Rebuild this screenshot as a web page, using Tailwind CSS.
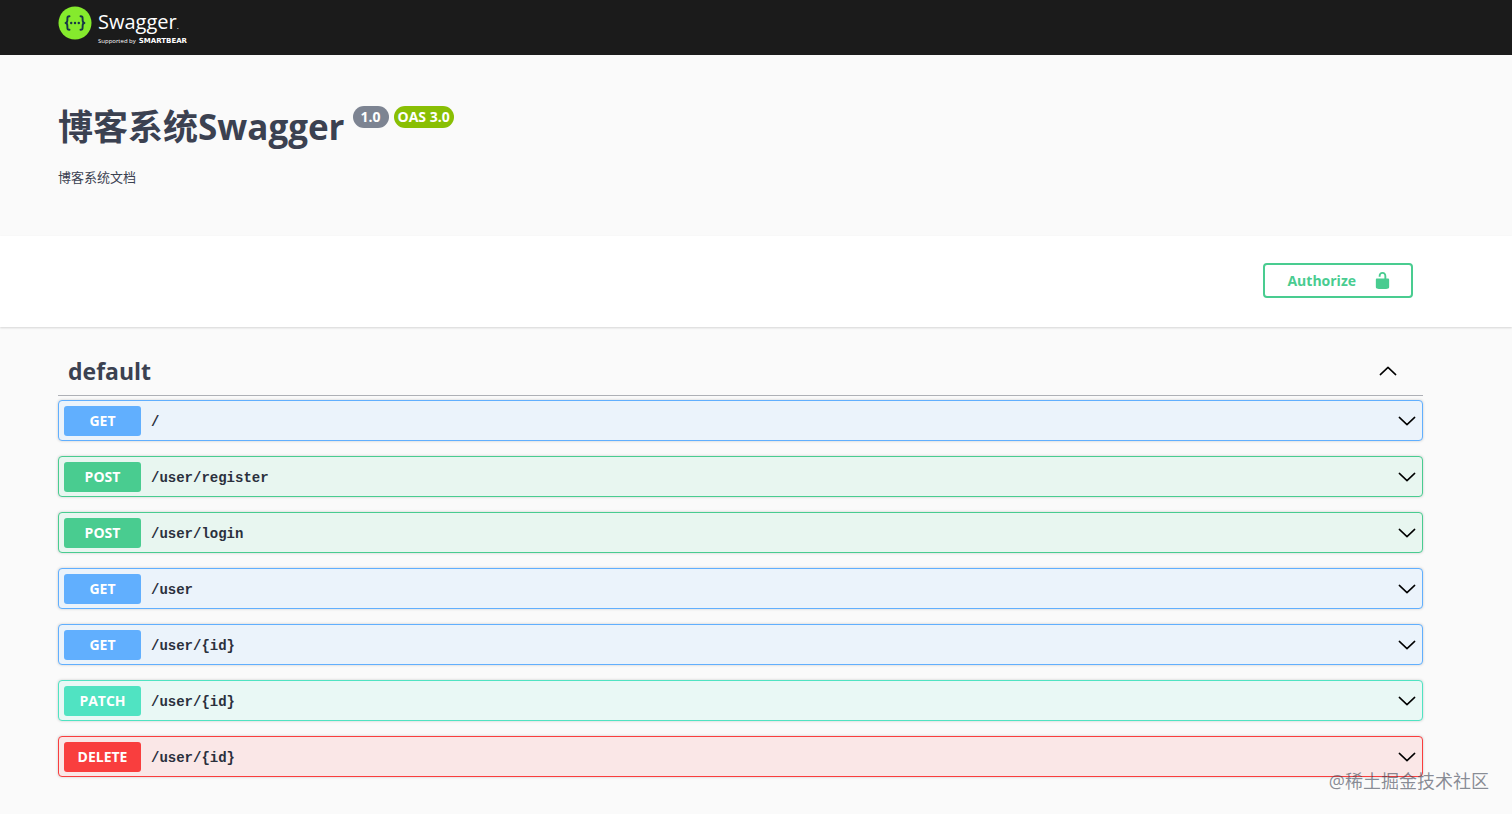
<!DOCTYPE html>
<html lang="zh-CN">
<head>
  <meta charset="UTF-8">
  <meta name="viewport" content="width=device-width, initial-scale=1.0">
  <title>博客系统Swagger</title>
  <script src="https://cdn.jsdelivr.net/npm/@tailwindcss/browser@4"></script>
</head>
<body class="relative min-h-screen bg-[#fafafa] font-['Open_Sans','Noto_Sans_CJK_SC',sans-serif] text-[#3b4151]">
  <svg class="hidden">
    <symbol id="chevron" viewBox="0 0 20 20">
      <path d="M1.500 6 L10 14 L18.500 6" fill="none" stroke="currentColor" stroke-width="1.700" stroke-linecap="round" stroke-linejoin="round"/>
    </symbol>
  </svg>

  <!-- Topbar -->
  <header class="bg-[#1b1b1b] pl-[58px] pr-[90px] pt-[6px] h-[55px]">
    <a href="#" class="inline-flex gap-[6px] text-white">
      <svg class="size-[34px]" viewBox="0 0 34 34">
        <circle cx="17" cy="17" r="16.5" fill="#85ea2d"/>
        <g fill="none" stroke="#173647" stroke-width="1.9" stroke-linecap="round" stroke-linejoin="round">
          <path d="M11.500 10.200 C9.600 10.200 9.300 11 9.400 13 C9.500 15.600 9.300 16.900 7.600 17 C9.300 17.100 9.500 18.400 9.400 21 C9.300 23 9.600 23.800 11.500 23.800"/>
          <path d="M22.500 10.200 C24.400 10.200 24.700 11 24.600 13 C24.500 15.600 24.700 16.900 26.400 17 C24.700 17.100 24.500 18.400 24.600 21 C24.700 23 24.400 23.800 22.500 23.800"/>
        </g>
        <g fill="#173647">
          <circle cx="13.200" cy="17" r="1.200"/>
          <circle cx="17" cy="17" r="1.200"/>
          <circle cx="20.800" cy="17" r="1.200"/>
        </g>
      </svg>
      <span class="flex flex-col pt-[4px]">
        <span class="text-[20px] leading-[24px]">Swagger<span class="text-[8px]">.</span></span>
        <span class="flex gap-[3px] text-[6px] leading-[6px]">Supported by <b class="font-['DejaVu_Sans',sans-serif] text-[7px]">SMARTBEAR</b></span>
      </span>
    </a>
  </header>

  <!-- Info -->
  <section class="h-[181px] pl-[58px] pr-[90px] pt-[48px]">
    <div class="flex items-start gap-2">
      <h1 class="text-[35px] leading-[48px] font-bold">博客系统Swagger</h1>
      <div class="mt-[3px] flex gap-[5px] text-sm leading-[22px] font-bold text-white">
        <span class="rounded-full bg-[#7d8492] px-[8px]">1.0</span>
        <span class="rounded-full bg-[#89bf04] px-[4px]">OAS 3.0</span>
      </div>
    </div>
    <p class="mt-[16px] text-[13px] leading-[20px]">博客系统文档</p>
  </section>

  <!-- Authorize -->
  <section class="flex justify-end bg-white pr-[99px] pt-[27px] pb-[29px] shadow-[0_1px_2px_rgba(0,0,0,0.15)]">
    <button class="flex h-[35px] items-center gap-[17px] rounded border-2 border-[#49cc90] pl-[22px] pr-[19px] text-sm font-bold text-[#49cc90]">
      Authorize
      <svg class="size-[19px]" viewBox="0 0 20 20" fill="currentColor">
        <path d="M15.800 8H14V5.600C14 2.703 12.665 1 10 1 7.334 1 6 2.703 6 5.600V6h2v-.801C8 3.754 8.797 3 10 3c1.203 0 2 .754 2 2.199V8H4c-.553 0-1 .646-1 1.199V17c0 .549.428 1.139.951 1.307l1.197.387C5.672 18.861 6.550 19 7.100 19h5.800c.549 0 1.428-.139 1.951-.307l1.196-.387c.524-.167.953-.757.953-1.306V9.199C17 8.646 16.352 8 15.800 8z"/>
      </svg>
    </button>
  </section>

  <!-- Operations -->
  <main class="pl-[58px] pr-[89px] pt-[20px]">
    <div class="flex h-[49px] items-center justify-between border-b border-[#3b4151]/40 pl-[10px] pr-[26px]">
      <h2 class="text-[23px] leading-[48px] font-bold">default</h2>
      <button aria-label="Collapse default" class="text-black"><svg class="size-[18px] rotate-180"><use href="#chevron"/></svg></button>
    </div>
    <div id="operations" class="mt-[4px] flex flex-col gap-[15px]"></div>
  </main>

  <div class="absolute right-[23px] top-[768px] text-lg leading-[26px] text-[#3b4151]/60">@稀土掘金技术社区</div>

  <script>
    const styles = {
      GET: { row: 'border-[#61affe] bg-[#ebf3fb]', badge: 'bg-[#61affe]' },
      POST: { row: 'border-[#49cc90] bg-[#e8f6f0]', badge: 'bg-[#49cc90]' },
      PATCH: { row: 'border-[#50e3c2] bg-[#e9f8f5]', badge: 'bg-[#50e3c2]' },
      DELETE: { row: 'border-[#f93e3e] bg-[#fae7e7]', badge: 'bg-[#f93e3e]' },
    };
    const operations = [
      ['GET', '/'],
      ['POST', '/user/register'],
      ['POST', '/user/login'],
      ['GET', '/user'],
      ['GET', '/user/{id}'],
      ['PATCH', '/user/{id}'],
      ['DELETE', '/user/{id}'],
    ];
    document.getElementById('operations').innerHTML = operations.map(([method, path]) => `
      <button class="flex h-[41px] w-full items-center rounded border px-[5px] shadow-[0_0_3px_rgba(0,0,0,0.19)] ${styles[method].row}">
        <span class="w-[77px] rounded-[3px] text-center text-sm leading-[30px] font-bold text-white ${styles[method].badge}">${method}</span>
        <span class="ml-[10px] flex-1 pt-[3px] text-left font-['Liberation_Mono',monospace] text-sm font-bold text-[#2b303d]">${path}</span>
        <svg class="mr-[1px] size-[18px] text-black"><use href="#chevron"/></svg>
      </button>`).join('');
  </script>
</body>
</html>
